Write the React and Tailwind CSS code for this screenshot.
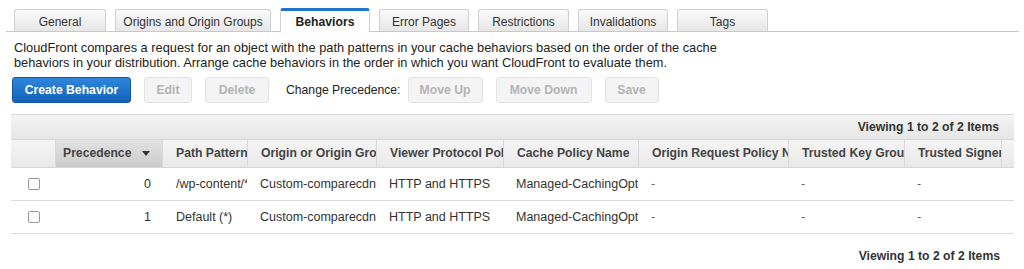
import React from "react";

const tabs = [
  { label: "General", w: "w-[92px]" },
  { label: "Origins and Origin Groups", w: "w-[156px]" },
  { label: "Behaviors", w: "w-[90px]", active: true },
  { label: "Error Pages", w: "w-[90px]" },
  { label: "Restrictions", w: "w-[91px]" },
  { label: "Invalidations", w: "w-[90px]" },
  { label: "Tags", w: "w-[91px]" },
];

const cols = [
  { label: "", w: "w-[44px]" },
  { label: "Precedence", w: "w-[107px]", sorted: true },
  { label: "Path Pattern", w: "w-[85px]" },
  { label: "Origin or Origin Group", w: "w-[129px]" },
  { label: "Viewer Protocol Policy", w: "w-[127px]" },
  { label: "Cache Policy Name", w: "w-[135px]" },
  { label: "Origin Request Policy Name", w: "w-[150px]" },
  { label: "Trusted Key Groups", w: "w-[116px]" },
  { label: "Trusted Signers", w: "w-[97px]" },
  { label: "", w: "w-[13px]" },
];

const rows = [
  ["0", "/wp-content/*", "Custom-comparecdn", "HTTP and HTTPS", "Managed-CachingOptimized", "-", "-", "-"],
  ["1", "Default (*)", "Custom-comparecdn", "HTTP and HTTPS", "Managed-CachingOptimized", "-", "-", "-"],
];

function DisabledBtn({ children, w }) {
  return (
    <div className={`${w} h-[26px] flex items-center justify-center rounded-[3px] border border-[#e3e3e3] bg-[#f4f4f4] text-[12.2px] font-bold text-[#b3b3b3]`}>
      {children}
    </div>
  );
}

export default function App() {
  return (
    <div className="w-[1024px] h-[269px] bg-white text-[#333] overflow-hidden" style={{ fontFamily: '"Liberation Sans", Arial, sans-serif' }}>
      {/* Tabs */}
      <div className="ml-[6px] mr-[5px] pt-[8px] flex items-end gap-[9px] pl-[8px] border-b border-[#c8c8c8] h-[32px]">
        {tabs.map((t) =>
          t.active ? (
            <div key={t.label} className={`${t.w} h-[24px] -mb-px flex items-center justify-center pt-[1px] bg-white border-x border-[#d0d0d0] border-t-[3px] border-t-[#1f73c9] rounded-t-[3px] text-[12.2px] font-bold text-[#222]`}>
              {t.label}
            </div>
          ) : (
            <div key={t.label} className={`${t.w} h-[22px] flex items-center justify-center pt-[2px] bg-gradient-to-b from-[#fbfbfb] to-[#e6e6e6] border border-b-0 border-[#cfcfcf] rounded-t-[3px] text-[12px] text-[#333]`}>
              {t.label}
            </div>
          )
        )}
      </div>

      {/* Description */}
      <p className="ml-[14px] mt-[8px] text-[12.8px] leading-[15px] text-[#222] w-[740px]">
        CloudFront compares a request for an object with the path patterns in your cache behaviors based on the order of the cache
        <br />
        behaviors in your distribution. Arrange cache behaviors in the order in which you want CloudFront to evaluate them.
      </p>

      {/* Buttons */}
      <div className="ml-[12px] mt-[7px] flex items-center">
        <div className="w-[119px] h-[26px] flex items-center justify-center rounded-[3px] border border-[#1456a0] bg-gradient-to-b from-[#2f86dc] to-[#1463bb] text-[12.2px] font-bold text-white">
          Create Behavior
        </div>
        <div className="ml-[13px]"><DisabledBtn w="w-[48px]">Edit</DisabledBtn></div>
        <div className="ml-[13px]"><DisabledBtn w="w-[64px]">Delete</DisabledBtn></div>
        <span className="ml-[17px] text-[12.2px] text-[#222]">Change Precedence:</span>
        <div className="ml-[7px]"><DisabledBtn w="w-[75px]">Move Up</DisabledBtn></div>
        <div className="ml-[13px]"><DisabledBtn w="w-[96px]">Move Down</DisabledBtn></div>
        <div className="ml-[13px]"><DisabledBtn w="w-[54px]">Save</DisabledBtn></div>
      </div>

      {/* Table */}
      <div className="ml-[11px] mt-[11px] w-[1003px]">
        <div className="h-[25px] flex items-center justify-end pr-[15px] bg-gradient-to-b from-[#f3f3f3] to-[#e6e6e6] border-t border-[#d6d6d6] text-[12.2px] font-bold text-[#333]">
          Viewing 1 to 2 of 2 Items
        </div>
        <div className="flex h-[29px] bg-gradient-to-b from-[#f4f4f4] to-[#e9e9e9] border-y border-[#d6d6d6]">
          {cols.map((c, i) => (
            <div
              key={i}
              className={`${c.w} shrink-0 flex items-center overflow-hidden whitespace-nowrap text-[12.2px] font-bold text-[#444] ${i > 0 ? "border-l border-[#d8d8d8]" : ""} ${c.sorted ? "bg-gradient-to-b from-[#e2e2e2] to-[#cbcbcb] pl-[7px] pr-[12px] justify-between" : "pl-[13px]"}`}
            >
              <span>{c.label}</span>
              {c.sorted && (
                <svg width="8" height="5" viewBox="0 0 8 5"><path d="M0 0h8L4 5z" fill="#333" /></svg>
              )}
            </div>
          ))}
        </div>
        {rows.map((r, ri) => (
          <div key={ri} className="flex h-[33px] border-b border-[#dcdcdc] text-[12.5px] text-[#333]">
            <div className="w-[44px] shrink-0 flex items-center pl-[17px]">
              <div className="w-[12px] h-[12px] rounded-[2px] border border-[#9a9a9a] bg-white" />
            </div>
            <div className="w-[107px] shrink-0 flex items-center justify-end pr-[11px]">{r[0]}</div>
            {r.slice(1).map((v, ci) => (
              <div
                key={ci}
                className={`${cols[ci + 2].w} shrink-0 flex items-center overflow-hidden whitespace-nowrap ${ci === 0 ? "pl-[14px]" : "pl-[13px]"} ${v === "-" ? "text-[#666]" : ""}`}
              >
                {v}
              </div>
            ))}
          </div>
        ))}
      </div>

      <div className="mt-[13px] w-[1000px] text-right text-[12.2px] font-bold text-[#333]">
        Viewing 1 to 2 of 2 Items
      </div>
    </div>
  );
}
